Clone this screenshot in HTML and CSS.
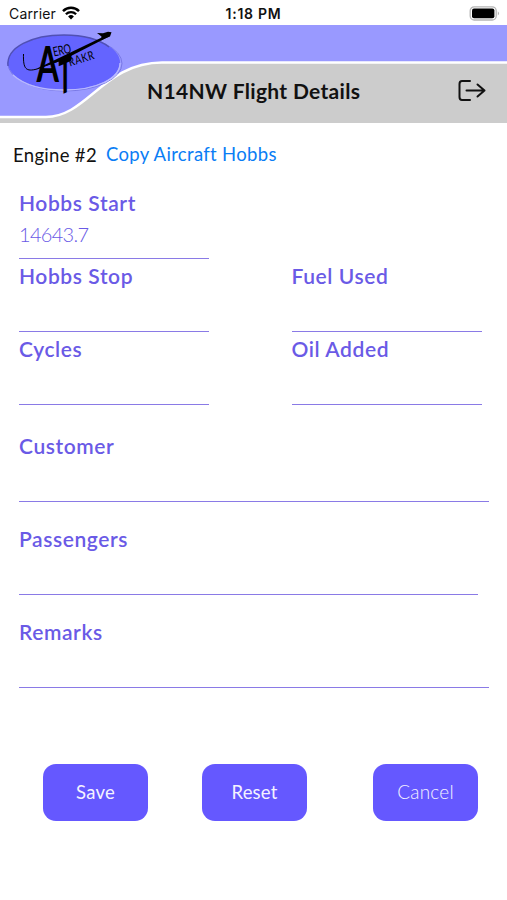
FILE: index.html
```html
<!DOCTYPE html>
<html lang="en">
<head>
  <meta charset="UTF-8" />
  <meta name="viewport" content="width=device-width, initial-scale=1.0"/>
  <title>Flight Details</title>
  <link rel="stylesheet" href="styles.css">
</head>
<body>

  <div class="status-bar">
    <div class="carrier">
      <span>Carrier</span>
      <svg class="wifi" width="18" height="14" viewBox="0 0 18 14" fill="none" stroke="#000">
        <path d="M1 5.1a11.5 11.5 0 0 1 16 0" stroke-width="2.5"/>
        <path d="M3.9 8.3a7.2 7.2 0 0 1 10.2 0" stroke-width="2.3"/>
        <path d="M9 13.6l-2.9-3.1a4.1 4.1 0 0 1 5.8 0z" fill="#000" stroke="none"/>
      </svg>
    </div>
    <div class="time">1:18 PM</div>
    <svg class="battery" width="31" height="15" viewBox="0 0 31 15">
      <rect x="1.2" y="0.8" width="26" height="13.2" rx="4" fill="#fff" stroke="#b5b5b5" stroke-width="1.3"/>
      <rect x="3" y="2.6" width="22.4" height="9.6" rx="2" fill="#000"/>
      <path d="M28.8 5.2q2.4 2.2 0 4.4z" fill="#b5b5b5"/>
    </svg>
  </div>

  <div class="header">
    <svg class="header-art" width="507" height="99" viewBox="0 0 507 99">
      <path d="M0 92H46C87 92 104 38 162 38H507V98H0Z" fill="#ccc"/>
      <path d="M0 92H46C87 92 104 37.5 162 37.5H507" fill="none" stroke="#fff" stroke-width="2.4"/>
      <ellipse cx="65" cy="38.5" rx="57" ry="27.5" fill="none" stroke="#7878e6" stroke-width="1"/>
      <ellipse cx="64" cy="37.5" rx="56" ry="27.5" fill="#6464ff"/>
      <path d="M8 41C6 22 32 10 64 10C84 10 100 15 109 22" fill="none" stroke="#5050b4" stroke-width="1.4"/>
      <path d="M13 50C26 62 44 65 64 65C96 65 120 54 120 38" fill="none" stroke="#b9b9ff" stroke-width="1.3"/>
      <path d="M23.5 29C23 44 26 47 37 44L60 35.5" fill="none" stroke="#000" stroke-width="1"/>
      <path d="M36 44L108 9.5l1 2L68 32.5 62 35.5Z"/>
      <path d="M97 8l6 .3 5-1.600 3.500.5-1.500 4.300-5 2-4 2 .5-4z"/>
      <text class="logo-big" transform="translate(36.5 57) scale(.66 1)">A</text>
      <text class="logo-big stem" transform="translate(58.5 71) skewY(-24) scale(.45 1)">T</text>
      <text class="logo-small" transform="translate(54 31.5) rotate(-12) scale(.72 1)">ERO</text>
      <text class="logo-small wide" transform="translate(70 41.5) rotate(-17) scale(.78 1)">RAKR</text>
    </svg>
    <h1>N14NW Flight Details</h1>
    <svg class="logout" width="30" height="24" viewBox="0 0 30 24" fill="none" stroke="#111" stroke-width="2" stroke-linecap="round" stroke-linejoin="round">
      <path d="M13 2H5Q2.5 2 2.5 5V18Q2.5 21 5 21H13"/>
      <path d="M9.5 11.5H27.5M20.5 5.500l7 6-7 6"/>
    </svg>
  </div>

  <div class="engine-row">
    <span>Engine #2</span>
    <a class="copy-link">Copy Aircraft Hobbs</a>
  </div>

  <form>
    <div class="grid">
      <div class="field start">
        <label for="hobbsStart">Hobbs Start</label>
        <input type="text" id="hobbsStart" value="14643.7" />
      </div>
      <div class="field">
        <label for="hobbsStop">Hobbs Stop</label>
        <input type="text" id="hobbsStop" />
      </div>
      <div class="field">
        <label for="fuelUsed">Fuel Used</label>
        <input type="text" id="fuelUsed" />
      </div>
      <div class="field">
        <label for="cycles">Cycles</label>
        <input type="text" id="cycles" />
      </div>
      <div class="field">
        <label for="oilAdded">Oil Added</label>
        <input type="text" id="oilAdded" />
      </div>
    </div>

    <div class="wide-fields">
      <div class="field">
        <label for="customer">Customer</label>
        <input type="text" id="customer" />
      </div>
      <div class="field passengers">
        <label for="passengers">Passengers</label>
        <input type="text" id="passengers" />
      </div>
      <div class="field">
        <label for="remarks">Remarks</label>
        <input type="text" id="remarks" />
      </div>
    </div>

    <div class="buttons">
      <button type="button">Save</button>
      <button type="button">Reset</button>
      <button type="button" class="cancel">Cancel</button>
    </div>
  </form>

</body>
</html>
```
FILE: styles.css
```css
* { box-sizing: border-box; }
body {
  margin: 0;
  min-height: 900px;
  font-family: Lato, sans-serif;
  background: #fff;
  color: #111;
}

.status-bar {
  display: grid;
  grid-template-columns: 1fr auto 1fr;
  align-items: center;
  height: 25px;
  padding: 2px 7px 0 9px;
  font-family: Inter, sans-serif;
  font-size: 14px;
}

.carrier {
  display: flex;
  align-items: center;
  gap: 6px;
  letter-spacing: 0.15px;
}

.wifi {
  margin-top: -2px;
}

.time {
  padding-right: 2px;
  font-weight: 600;
  letter-spacing: 0.75px;
}

.battery {
  justify-self: end;
}

.header {
  position: relative;
  display: flex;
  justify-content: space-between;
  align-items: center;
  height: 98px;
  padding: 34px 20px 0 147px;
  background: #9999ff;
}

.header-art {
  position: absolute;
  top: 0;
  left: 0;
}

.logo-big {
  font-size: 49px;
  font-weight: 700;
}

.stem {
  font-weight: 900;
}

.logo-small {
  font-size: 13px;
  letter-spacing: -0.3px;
}

.wide {
  font-size: 12px;
  letter-spacing: 0.8px;
}

h1 {
  position: relative;
  margin: 0 0 2px;
  font-size: 21px;
  font-weight: 700;
  letter-spacing: 0.32px;
}

.logout {
  position: relative;
}

.engine-row {
  display: flex;
  gap: 9px;
  height: 62px;
  padding: 19px 13px 0;
  font-size: 18.5px;
  line-height: 26px;
  letter-spacing: 0.32px;
}

.copy-link {
  margin-top: -1px;
  color: #0a7df5;
}

.grid {
  display: grid;
  grid-template-columns: 190px 190px;
  column-gap: 82.5px;
  padding-left: 19px;
}

.start {
  grid-column: 1 / 3;
  width: 190px;
}

.field {
  height: 73.2px;
}

.field label {
  display: block;
  font-size: 21px;
  font-weight: 600;
  line-height: 36px;
  letter-spacing: 0.58px;
  color: #6a5ae6;
}

.field input {
  display: block;
  width: 100%;
  height: 38px;
  padding: 0 0 12px;
  border: none;
  border-bottom: 1.5px solid #8a7ae6;
  background: none;
  font-family: inherit;
  font-size: 20px;
  font-weight: 300;
  letter-spacing: -0.7px;
  color: #6a5ae6;
}

.wide-fields {
  display: grid;
  gap: 20px;
  padding: 23.4px 18px 0 19px;
}

.passengers {
  width: 459px;
}

.buttons {
  display: flex;
  padding: 76.4px 0 0 43px;
}

button {
  width: 105px;
  height: 57px;
  margin-right: 54px;
  padding-bottom: 2px;
  border: none;
  border-radius: 13px;
  background: #6558ff;
  font-family: inherit;
  font-size: 18.5px;
  letter-spacing: 0.2px;
  color: #f4f2ff;
}

.cancel {
  margin: 0 0 0 12px;
  font-size: 19px;
  font-weight: 300;
}
```
